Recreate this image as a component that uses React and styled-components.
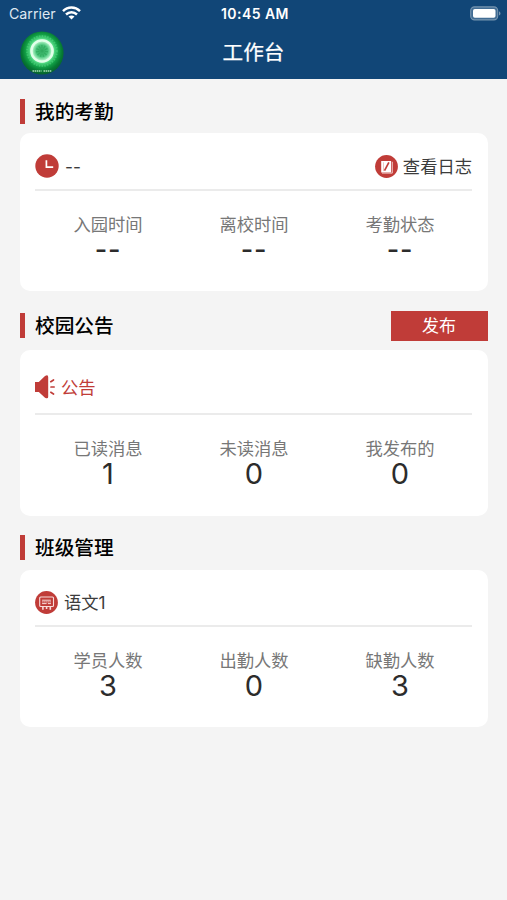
import React from "react";
import styled, { createGlobalStyle } from "styled-components";

const RED = "#c03c38";

const GlobalStyle = createGlobalStyle`
  * { box-sizing: border-box; }
  body {
    margin: 0;
    background: #f4f4f4;
    font-family: Inter, "Noto Sans CJK SC", sans-serif;
    color: #333;
  }
`;

const Screen = styled.div`
  width: 100%;
  min-height: 900px;
  background: #f4f4f4;
`;

const Header = styled.header`
  height: 79px;
  background: #114677;
  color: #fff;
`;

const StatusBar = styled.div`
  display: grid;
  grid-template-columns: 1fr auto 1fr;
  align-items: center;
  height: 27px;
  padding: 0 6px 0 9px;
`;

const Carrier = styled.div`
  display: flex;
  align-items: center;
  gap: 6px;
  font-size: 14.2px;
  line-height: 27px;
  color: #dfe8f1;
`;

const Clock = styled.div`
  font-size: 14px;
  font-weight: 600;
  letter-spacing: 0.45px;
  line-height: 27px;
`;

const BatterySlot = styled.div`
  display: flex;
  justify-content: flex-end;
`;

const NavBar = styled.div`
  display: grid;
  grid-template-columns: 1fr auto 1fr;
  align-items: center;
  height: 52px;
  padding: 0 20px;
`;

const Avatar = styled.svg`
  display: block;
  width: 44px;
  height: 44px;
`;

const Title = styled.h1`
  margin: 0;
  font-size: 20.6px;
  font-weight: 400;
  line-height: 52px;
  -webkit-text-stroke: 0.25px #fff;
`;

const Content = styled.main`
  padding: 0 19px 0 20px;
`;

const SectionHead = styled.div`
  display: flex;
  align-items: center;
  height: ${(p) => p.$height}px;
  padding-top: ${(p) => p.$top}px;
`;

const Marker = styled.span`
  width: 5px;
  height: 25px;
  margin-right: 10px;
  background: ${RED};
`;

const SectionTitle = styled.h2`
  margin: 0;
  padding-top: 1px;
  font-size: 19.7px;
  font-weight: 500;
  line-height: 26px;
  color: #000;
`;

const PublishButton = styled.button`
  width: 97px;
  height: 30px;
  margin-left: auto;
  padding: 1px 1px 0 0;
  border: 0;
  background: ${RED};
  color: #fff;
  font: inherit;
  font-size: 17px;
  line-height: 29px;
`;

const Card = styled.section`
  height: ${(p) => p.$height}px;
  padding: 0 16px 0 15px;
  border-radius: 10px;
  background: #fff;
`;

const CardHead = styled.div`
  display: flex;
  align-items: center;
  justify-content: space-between;
  height: ${(p) => p.$height}px;
  padding-top: ${(p) => p.$top}px;
  border-bottom: 2px solid #ebebeb;
`;

const IconLabel = styled.div`
  display: flex;
  align-items: center;
  gap: ${(p) => p.$gap || 6}px;
  font-size: 17.3px;
  line-height: 26px;
  color: ${(p) => (p.$accent ? RED : "#3c3c3c")};
`;

const LabelText = styled.span`
  padding-top: ${(p) => p.$top ?? 1}px;
`;

const Icon = styled.svg`
  display: block;
  flex: none;
`;

const Stats = styled.div`
  display: grid;
  grid-template-columns: repeat(3, 146px);
  padding-top: 21px;
  text-align: center;
`;

const StatLabel = styled.div`
  font-size: 17.3px;
  font-weight: 400;
  line-height: 25px;
  color: #777;
`;

const StatValue = styled.div`
  font-size: 29px;
  line-height: 26px;
  color: #2c2c2c;
`;

const EmptyValue = styled(StatValue)`
  font-size: 27px;
  font-weight: 500;
  letter-spacing: 0.8px;
`;

const WifiIcon = () => (
  <Icon width="19" height="15" viewBox="0 0 19 15" fill="none" stroke="#fff" strokeWidth="2.5">
    <path d="M1 5.1C5.8.4 13.2.4 18 5.1" />
    <path d="M4 8.5c3.2-3 7.8-3 11 0" />
    <path d="M9.5 13.6 6.5 10.6c1.8-1.5 4.2-1.5 6 0z" fill="#fff" stroke="none" />
  </Icon>
);

const BatteryIcon = () => (
  <Icon width="31" height="15" viewBox="0 0 31 15">
    <rect x="0.7" y="0.9" width="27" height="13" rx="3.8" fill="#426d94" stroke="#7795b0" strokeWidth="1.1" />
    <rect x="3" y="3" width="22.5" height="8.8" rx="1.8" fill="#fff" />
    <path d="M29 5.2c2 .9 2 3.5 0 4.4z" fill="#7795b0" />
  </Icon>
);

const AvatarLogo = () => (
  <Avatar viewBox="0 0 44 44">
    <defs>
      <radialGradient id="glow" cx="50%" cy="45%" r="54%">
        <stop offset="0" stopColor="#2da65a" />
        <stop offset="0.26" stopColor="#4bc67c" />
        <stop offset="0.44" stopColor="#c9ffd9" />
        <stop offset="0.53" stopColor="#52da83" />
        <stop offset="0.7" stopColor="#12a046" />
        <stop offset="0.86" stopColor="#067a33" />
        <stop offset="1" stopColor="#06632e" />
      </radialGradient>
    </defs>
    <circle cx="22" cy="22" r="21.6" fill="url(#glow)" />
    <circle cx="22" cy="20" r="15" fill="none" stroke="#62e38f" strokeWidth="1.8" strokeDasharray="1.4 1.4" opacity="0.4" />
    <circle cx="22" cy="20" r="10.6" fill="none" stroke="#e2ffea" strokeWidth="2.4" />
    <circle cx="22" cy="20" r="4.5" fill="none" stroke="#239d50" strokeWidth="3" strokeDasharray="1.2 1.3" opacity="0.5" />
    <path d="M12.5 40h9m2 0h8" stroke="#b9e5c3" strokeWidth="2.1" strokeDasharray="1.5 0.6" opacity="0.7" />
  </Avatar>
);

const ClockIcon = () => (
  <Icon width="24" height="24" viewBox="0 0 24 24">
    <circle cx="12" cy="12" r="11.7" fill={RED} />
    <path d="M11.4 6.2v7h6.8" fill="none" stroke="#fff" strokeWidth="1.7" />
  </Icon>
);

const LogIcon = () => (
  <Icon width="23" height="23" viewBox="0 0 23 23">
    <circle cx="11.5" cy="11.5" r="11.4" fill={RED} />
    <path d="M6.2 6h9.9v11.5H6.2z" fill="#fff" />
    <path d="M17.3 6.8v11.3H7" fill="none" stroke="#f5d5d3" strokeWidth="0.9" />
    <path d="M8.3 7.3v8.8" stroke={RED} strokeWidth="0.6" opacity="0.6" />
    <path d="m13.9 7.3-4.4 8.3" stroke={RED} strokeWidth="1.7" />
  </Icon>
);

const SpeakerIcon = () => (
  <Icon width="20" height="24" viewBox="0 0 20 24">
    <path d="M0 7.1h3.8L10 .9Q13.2-1 13.2 2v19.8q0 2.5-3.2.9L3.8 17H0z" fill={RED} />
    <path d="m15.8 6.7 2.7-1.7M16 12h3.2M15.8 17.3l2.7 1.7" fill="none" stroke={RED} strokeWidth="1.7" strokeLinecap="round" />
  </Icon>
);

const BoardIcon = () => (
  <Icon width="23" height="23" viewBox="0 0 23 23" fill="none" stroke="#f8dddb">
    <circle cx="11.5" cy="11.5" r="11.4" fill={RED} stroke="none" />
    <rect x="4.7" y="6" width="13.8" height="9.5" rx="1" strokeWidth="1.1" />
    <path d="M7.1 9.2h8.7M7.1 12.6h4.5m1.3 0h3" strokeWidth="1" />
    <path d="M7.2 10.9h8.8" strokeWidth="1" strokeDasharray="1.4 0.6" />
    <path d="M7.9 15.8v3M11.6 15.8v2.3M15.3 15.8v3" strokeWidth="1.6" />
  </Icon>
);

const StatGroup = ({ items }) => (
  <Stats>
    {items.map(([label, value]) => (
      <div key={label}>
        <StatLabel>{label}</StatLabel>
        {value === "--" ? <EmptyValue>--</EmptyValue> : <StatValue>{value}</StatValue>}
      </div>
    ))}
  </Stats>
);

export default function App() {
  return (
    <Screen>
      <GlobalStyle />
      <Header>
        <StatusBar>
          <Carrier>
            Carrier
            <WifiIcon />
          </Carrier>
          <Clock>10:45 AM</Clock>
          <BatterySlot>
            <BatteryIcon />
          </BatterySlot>
        </StatusBar>
        <NavBar>
          <AvatarLogo />
          <Title>工作台</Title>
        </NavBar>
      </Header>
      <Content>
        <SectionHead $height={54} $top={10}>
          <Marker />
          <SectionTitle>我的考勤</SectionTitle>
        </SectionHead>
        <Card $height={158}>
          <CardHead $height={58} $top={10}>
            <IconLabel>
              <ClockIcon />
              <LabelText>--</LabelText>
            </IconLabel>
            <IconLabel $gap={5}>
              <LogIcon />
              <LabelText>查看日志</LabelText>
            </IconLabel>
          </CardHead>
          <StatGroup
            items={[
              ["入园时间", "--"],
              ["离校时间", "--"],
              ["考勤状态", "--"],
            ]}
          />
        </Card>

        <SectionHead $height={59} $top={10}>
          <Marker />
          <SectionTitle>校园公告</SectionTitle>
          <PublishButton type="button">发布</PublishButton>
        </SectionHead>
        <Card $height={166}>
          <CardHead $height={65} $top={10}>
            <IconLabel $accent>
              <SpeakerIcon />
              <LabelText $top={2}>公告</LabelText>
            </IconLabel>
          </CardHead>
          <StatGroup
            items={[
              ["已读消息", "1"],
              ["未读消息", "0"],
              ["我发布的", "0"],
            ]}
          />
        </Card>

        <SectionHead $height={54} $top={9}>
          <Marker />
          <SectionTitle>班级管理</SectionTitle>
        </SectionHead>
        <Card $height={157}>
          <CardHead $height={57} $top={10}>
            <IconLabel>
              <BoardIcon />
              <LabelText>语文1</LabelText>
            </IconLabel>
          </CardHead>
          <StatGroup
            items={[
              ["学员人数", "3"],
              ["出勤人数", "0"],
              ["缺勤人数", "3"],
            ]}
          />
        </Card>
      </Content>
    </Screen>
  );
}
